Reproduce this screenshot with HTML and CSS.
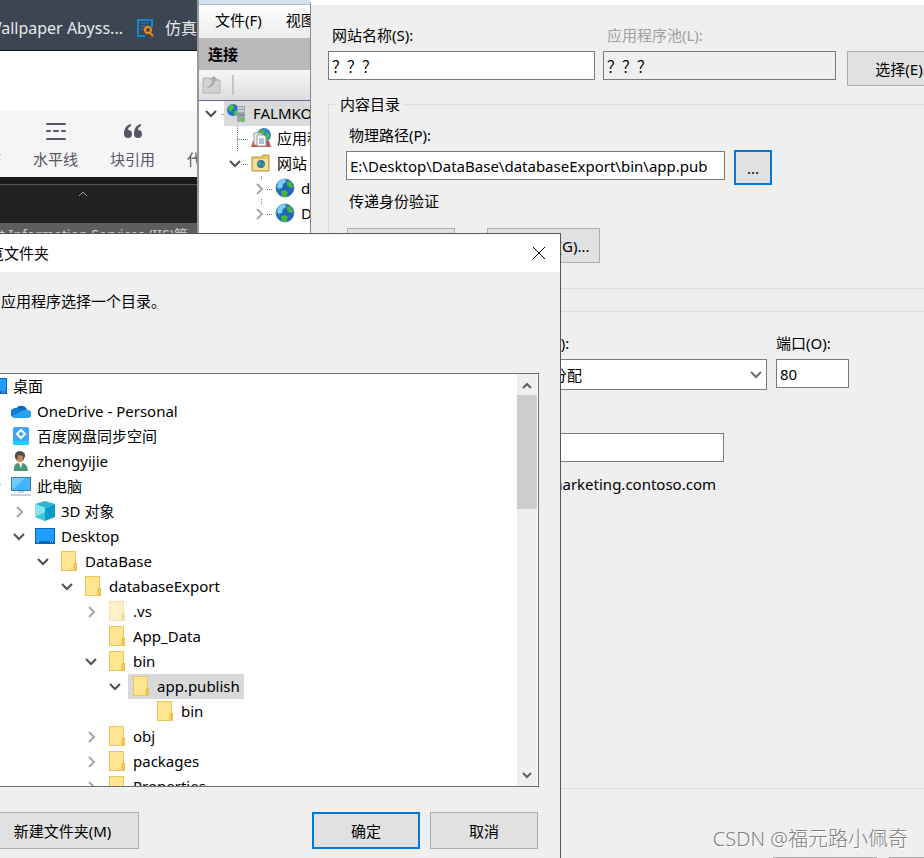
FILE: index.html
```
<!DOCTYPE html>
<html lang="zh-CN">
<head>
    <meta charset="UTF-8">
    <meta name="viewport" content="width=device-width, initial-scale=1.0">
    <title>浏览文件夹</title>
    <link rel="stylesheet" href="styles.css">
</head>
<body>

<!-- shared icons -->
<svg class="sprite" aria-hidden="true">
    <symbol id="open" viewBox="0 0 22 25"><path d="M4 10l5 5 5-5" fill="none" stroke="#505050" stroke-width="2"/></symbol>
    <symbol id="closed" viewBox="0 0 22 25"><path d="M7 8l5 5-5 5" fill="none" stroke="#a6a6a6" stroke-width="2"/></symbol>
    <symbol id="folder" viewBox="0 0 20 20">
        <path d="M2 0h15v12h1v8H2z" fill="#ecc659"/>
        <path d="M3 1h13v18H3z" fill="#ffe591"/>
        <path d="M15 19v-6l2-1v7z" fill="#f8d467" stroke="#e6b93e"/>
    </symbol>
    <symbol id="screen" viewBox="0 0 20 20">
        <path d="M0 2h20v16H0z" fill="#0867b5"/>
        <path d="M1 3h18v12H1z" fill="#1e9fff"/>
        <path d="M2 16h2M15 16h1M17 16h1" stroke="#c5e8ff"/>
    </symbol>
    <symbol id="globe" viewBox="0 0 20 20">
        <circle cx="10" cy="10" r="9" fill="#2563bd" stroke="#528bc2"/>
        <path d="M3 5q3-4 7-4l1 3-3 2-1 4-3 1-2-2z" fill="#7bcff0"/>
        <path d="M12 3l4 1 2 5-3 1-3-3zM6 13l4-1 3 2-2 5-4-1z" fill="#43ba35"/>
        <path d="M3 10l2 1v3z" fill="#35a646"/>
    </symbol>
</svg>

<div class="desktop">

    <!-- web browser -->
    <section class="browser">
        <nav class="bookmarks">
            <a href="#">Wallpaper Abyss...</a>
            <svg width="18" height="18" viewBox="0 0 18 18" fill="none">
                <path d="M8 17H1V1h14v7" stroke="#1686cf" stroke-width="2"/>
                <path d="M4 4h8M4 7h8M4 10h3" stroke="#1686cf"/>
                <circle cx="11" cy="11" r="3" stroke="#ee8b18" stroke-width="2"/>
                <path d="M13 14l3 3" stroke="#ee8b18" stroke-width="2"/>
            </svg>
            <a href="#">仿真</a>
        </nav>
        <div class="page-top"></div>
        <div class="editor-bar">
            <button>
                <svg width="20" height="20" viewBox="0 0 20 20"><path d="M0 3h20M0 10h20M0 17h20" stroke="#555666" stroke-width="2"/></svg>
                对齐
            </button>
            <button>
                <svg width="20" height="20" viewBox="0 0 20 20" stroke="#555666" stroke-width="2" stroke-linecap="round"><path d="M1 3h18M1 18h18M1 10h3M8 10h4M16 10h3"/></svg>
                水平线
            </button>
            <button>
                <svg width="20" height="20" viewBox="0 0 20 20" fill="#555666">
                    <path d="M8 3C3 4 1 8 1 13a4 4 0 1 0 4-4q0-3 3-4z"/>
                    <path d="M18 3c-5 1-7 5-7 10a4 4 0 1 0 4-4q0-3 3-4z"/>
                </svg>
                块引用
            </button>
            <button>
                <svg width="20" height="20"></svg>
                代码段
            </button>
        </div>
        <div class="dark-strip"></div>
        <div class="dark-panel">
            <svg width="10" height="6" viewBox="0 0 10 6"><path d="M1 5l4-4 4 4" fill="none" stroke="#999"/></svg>
        </div>
        <div class="tab-title">Internet Information Services (IIS)管</div>
    </section>

    <!-- IIS manager -->
    <section class="manager">
        <div class="manager-title"></div>
        <nav class="menu"><button>文件(F)</button><button>视图(V)</button></nav>
        <h2>连接</h2>
        <div class="manager-tools">
            <svg width="20" height="20" viewBox="0 0 20 20">
                <path d="M1 3h8l1 2h8v13H1z" fill="#d2d2d2" stroke="#b4b4b4"/>
                <path d="M4 13q7-3 6-9l-3 1 5-4 4 4-3 1q-1 7-9 7z" fill="#aaa"/>
            </svg>
            <span class="divider"></span>
        </div>
        <ul class="tree sites">
            <li>
                <div class="row">
                    <svg class="toggle"><use href="#open"/><path d="M19 13h3" class="dots"/></svg>
                    <span class="node server">
                        <svg class="icon" viewBox="0 0 20 20">
                            <circle cx="6" cy="7" r="6" fill="#246fc9"/>
                            <path d="M1 5q2-4 5-4l1 4-4 4zM7 8l3-1v4l-3 2z" fill="#45c53b"/>
                            <path d="M10 3h8v16h-8z" fill="#9aa7b4"/>
                            <path d="M11 5h6M11 8h6" stroke="#eef3f7"/>
                            <path d="M11 12h6" stroke="#6d7883"/>
                            <path d="M14 15h3v3h-3z" fill="#55cf24"/>
                        </svg>
                        FALMKO
                    </span>
                </div>
                <ul>
                    <li>
                        <div class="row">
                            <svg class="toggle"><path d="M11 0v25M11 13h11" class="dots"/></svg>
                            <span class="node">
                                <svg class="icon" viewBox="0 0 20 20">
                                    <circle cx="13" cy="7" r="7" fill="#327fcb"/>
                                    <path d="M8 3l6-2-1 4-4 2zM15 4l4 3-2 5-3-3z" fill="#47bc42"/>
                                    <path d="M2 13L0 19h20l-2-6z" fill="#bd5350"/>
                                    <path d="M3 5h8v12H3z" fill="#eee" stroke="#999"/>
                                    <path d="M6 7h7l2 2v9H6z" fill="#fff" stroke="#999"/>
                                    <path d="M8 11h5M8 13h5M8 15h5" stroke="#538bc8"/>
                                </svg>
                                应用程序池
                            </span>
                        </div>
                    </li>
                    <li>
                        <div class="row">
                            <svg class="toggle"><use href="#open"/><path d="M17 13h5" class="dots"/></svg>
                            <span class="node">
                                <svg class="icon" viewBox="0 0 20 20">
                                    <path d="M1 4h10l1-2h6v16H1z" fill="#ebc765" stroke="#ba9341"/>
                                    <path d="M2 6h15v11H2z" fill="#f8df98"/>
                                    <circle cx="10" cy="11" r="4" fill="#2b72bd"/>
                                    <path d="M7 10l3-2v3l-2 2zM11 11l3-1-2 4z" fill="#4bbd45"/>
                                </svg>
                                网站
                            </span>
                        </div>
                        <ul>
                            <li>
                                <div class="row">
                                    <svg class="toggle"><use href="#closed"/><path d="M11 0v3M11 23v2M17 13h5" class="dots"/></svg>
                                    <span class="node"><svg class="icon"><use href="#globe"/></svg>demo</span>
                                </div>
                            </li>
                            <li>
                                <div class="row">
                                    <svg class="toggle"><use href="#closed"/><path d="M11 0v3M17 13h5" class="dots"/></svg>
                                    <span class="node"><svg class="icon"><use href="#globe"/></svg>Default</span>
                                </div>
                            </li>
                        </ul>
                    </li>
                </ul>
            </li>
        </ul>
    </section>

    <!-- add website dialog -->
    <form class="add-site">
        <div class="name-row">
            <div class="field name">
                <label for="siteName">网站名称(S):</label>
                <input type="text" id="siteName" value="？？？">
            </div>
            <div class="field pool">
                <label for="appPool">应用程序池(L):</label>
                <input type="text" id="appPool" value="？？？" readonly>
            </div>
            <button type="button">选择(E)...</button>
        </div>

        <fieldset class="content-dir">
            <legend>内容目录</legend>
            <div class="path-row">
                <div class="field path">
                    <label for="path">物理路径(P):</label>
                    <input type="text" id="path" value="E:\Desktop\DataBase\databaseExport\bin\app.pub">
                </div>
                <button type="button" class="default">...</button>
            </div>
            <p>传递身份验证</p>
            <div class="auth-buttons">
                <button type="button">连接为(C)...</button>
                <button type="button">测试设置(G)...</button>
            </div>
        </fieldset>

        <fieldset class="binding">
            <legend>绑定</legend>
            <div class="address-row">
                <div class="field address">
                    <label for="ip">IP 地址(I):</label>
                    <div class="select-box">
                        <select id="ip"><option>全部未分配</option></select>
                        <svg width="12" height="8" viewBox="0 0 12 8"><path d="M1 1l5 5 5-5" fill="none" stroke="#707070" stroke-width="2"/></svg>
                    </div>
                </div>
                <div class="field port">
                    <label for="port">端口(O):</label>
                    <input type="text" id="port" value="80">
                </div>
            </div>
            <div class="field host">
                <label for="host">主机名(H):</label>
                <input type="text" id="host">
            </div>
            <p class="sample">示例: www.contoso.com 或 marketing.contoso.com</p>
        </fieldset>

        <div class="form-buttons">
            <button type="button">确定</button>
            <button type="button">取消</button>
        </div>
    </form>

    <!-- browse for folder dialog -->
    <section class="browse">
        <header>
            <h1>浏览文件夹</h1>
            <button class="close" aria-label="关闭">
                <svg width="14" height="14" viewBox="0 0 14 14"><path d="M1 1l12 12M13 1L1 13" stroke="#000"/></svg>
            </button>
        </header>
        <p class="prompt">为应用程序选择一个目录。</p>
        <div class="tree-box">
            <ul class="tree folders">
                <li>
                    <div class="row"><span class="node"><svg class="icon"><use href="#screen"/></svg>桌面</span></div>
                    <ul>
                        <li>
                            <div class="row">
                                <svg class="toggle"><use href="#closed"/></svg>
                                <span class="node">
                                    <svg class="icon" viewBox="0 0 20 20">
                                        <path d="M5 8a6 6 0 0 1 11 1l-7 5-5-2z" fill="#0865b8"/>
                                        <path d="M5 7q5 0 8 4l-9 6a5 5 0 0 1 1-10z" fill="#117bd1"/>
                                        <path d="M11 10q3-2 5-1a4 4 0 0 1 1 8H4q-2 0-3-2z" fill="#28a0ed"/>
                                    </svg>
                                    OneDrive - Personal
                                </span>
                            </div>
                        </li>
                        <li>
                            <div class="row">
                                <svg class="toggle"><use href="#closed"/></svg>
                                <span class="node">
                                    <svg class="icon" viewBox="0 0 20 20">
                                        <rect x="2" y="1" width="16" height="18" rx="2" fill="#3ca5ff"/>
                                        <path d="M2 15h16v3q0 1-2 1H4q-2 0-2-1z" fill="#19d2ff"/>
                                        <path d="M10 4l4 4-4 4-4-4z" fill="none" stroke="#fff" stroke-width="2"/>
                                    </svg>
                                    百度网盘同步空间
                                </span>
                            </div>
                        </li>
                        <li>
                            <div class="row">
                                <svg class="toggle"><use href="#closed"/></svg>
                                <span class="node">
                                    <svg class="icon" viewBox="0 0 20 20">
                                        <path d="M3 20q-1-8 5-8h4q5 2 5 8z" fill="#489878"/>
                                        <path d="M7 11h5l-2 6z" fill="#f2eee6"/>
                                        <circle cx="9" cy="7" r="4" fill="#bc8963"/>
                                        <path d="M4 7q-1-7 5-7 6 1 5 6l-2 3V5L7 4 6 9z" fill="#514c48"/>
                                    </svg>
                                    zhengyijie
                                </span>
                            </div>
                        </li>
                        <li>
                            <div class="row">
                                <svg class="toggle"><use href="#open"/></svg>
                                <span class="node">
                                    <svg class="icon" viewBox="0 0 20 20">
                                        <path d="M0 1h20v14H0z" fill="#317fb5"/>
                                        <path d="M1 2h18v12H1z" fill="#43b4ff"/>
                                        <path d="M1 14L14 2H1z" fill="#70caff"/>
                                        <path d="M7 16h6M0 19h20" stroke="#8ca6b8"/>
                                    </svg>
                                    此电脑
                                </span>
                            </div>
                            <ul>
                                <li>
                                    <div class="row">
                                        <svg class="toggle"><use href="#closed"/></svg>
                                        <span class="node">
                                            <svg class="icon" viewBox="0 0 20 20">
                                                <path d="M0 3l10-3 10 3-10 4z" fill="#2eb5cc"/>
                                                <path d="M0 3l10 4v13L0 16z" fill="#82e4ed"/>
                                                <path d="M20 3L10 7v13l10-4z" fill="#079fca"/>
                                                <path d="M0 16l10-5v9z" fill="#42c6d7"/>
                                            </svg>
                                            3D 对象
                                        </span>
                                    </div>
                                </li>
                                <li>
                                    <div class="row"><svg class="toggle"><use href="#open"/></svg><span class="node"><svg class="icon"><use href="#screen"/></svg>Desktop</span></div>
                                    <ul>
                                        <li>
                                            <div class="row"><svg class="toggle"><use href="#open"/></svg><span class="node"><svg class="icon"><use href="#folder"/></svg>DataBase</span></div>
                                            <ul>
                                                <li>
                                                    <div class="row"><svg class="toggle"><use href="#open"/></svg><span class="node"><svg class="icon"><use href="#folder"/></svg>databaseExport</span></div>
                                                    <ul>
                                                        <li><div class="row"><svg class="toggle"><use href="#closed"/></svg><span class="node hidden-dir"><svg class="icon"><use href="#folder"/></svg>.vs</span></div></li>
                                                        <li><div class="row"><svg class="toggle"></svg><span class="node"><svg class="icon"><use href="#folder"/></svg>App_Data</span></div></li>
                                                        <li>
                                                            <div class="row"><svg class="toggle"><use href="#open"/></svg><span class="node"><svg class="icon"><use href="#folder"/></svg>bin</span></div>
                                                            <ul>
                                                                <li>
                                                                    <div class="row"><svg class="toggle"><use href="#open"/></svg><span class="node selected"><svg class="icon"><use href="#folder"/></svg>app.publish</span></div>
                                                                    <ul>
                                                                        <li><div class="row"><svg class="toggle"></svg><span class="node"><svg class="icon"><use href="#folder"/></svg>bin</span></div></li>
                                                                    </ul>
                                                                </li>
                                                            </ul>
                                                        </li>
                                                        <li><div class="row"><svg class="toggle"><use href="#closed"/></svg><span class="node"><svg class="icon"><use href="#folder"/></svg>obj</span></div></li>
                                                        <li><div class="row"><svg class="toggle"><use href="#closed"/></svg><span class="node"><svg class="icon"><use href="#folder"/></svg>packages</span></div></li>
                                                        <li><div class="row"><svg class="toggle"><use href="#closed"/></svg><span class="node"><svg class="icon"><use href="#folder"/></svg>Properties</span></div></li>
                                                    </ul>
                                                </li>
                                            </ul>
                                        </li>
                                    </ul>
                                </li>
                            </ul>
                        </li>
                    </ul>
                </li>
            </ul>
            <div class="scrollbar">
                <svg width="20" height="21" viewBox="0 0 20 21"><path d="M6 14l4-4 4 4" fill="none" stroke="#606060" stroke-width="2"/></svg>
                <div class="thumb"></div>
                <svg width="20" height="21" viewBox="0 0 20 21"><path d="M6 8l4 4 4-4" fill="none" stroke="#606060" stroke-width="2"/></svg>
            </div>
        </div>
        <footer>
            <button class="new-folder">新建文件夹(M)</button>
            <button class="default">确定</button>
            <button>取消</button>
        </footer>
    </section>

    <div class="watermark">CSDN @福元路小佩奇</div>
</div>

</body>
</html>
```
FILE: styles.css
```
* {
    box-sizing: border-box;
}

body {
    margin: 0;
    font-family: "Noto Sans", "Noto Sans CJK SC", sans-serif;
    font-size: 15px;
    line-height: 20px;
    color: #000;
}

h1, h2, p, ul {
    margin: 0;
    padding: 0;
    font-size: 15px;
}

ul {
    list-style: none;
}

button, input, select {
    font: inherit;
    color: inherit;
}

button {
    padding: 0;
    white-space: nowrap;
    background-color: #e1e1e1;
    border: 1px solid #adadad;
}

button.default {
    border: 2px solid #0078d7;
}

input, select {
    width: 100%;
    height: 29px;
    padding: 0 3px;
    border: 1px solid #7a7a7a;
    border-radius: 0;
    background-color: #fff;
}

.sprite {
    display: none;
}

.desktop {
    position: relative;
    min-height: 100vh;
    overflow: hidden;
    background-color: #efefef;
}

/* ---- browser ---- */
.browser {
    position: absolute;
    left: 0;
    top: 0;
    width: 197px;
    overflow: hidden;
    white-space: nowrap;
}

.bookmarks {
    display: flex;
    align-items: center;
    justify-content: flex-end;
    gap: 14px;
    height: 51px;
    padding: 6px 0 0;
    background-color: #3b4652;
    border-bottom: 1px solid #111;
    font-size: 16px;
}

.bookmarks a {
    color: #e8eaec;
    text-decoration: none;
}

.bookmarks svg {
    flex: none;
    margin-right: -4px;
}

.page-top {
    height: 60px;
    background-color: #fff;
}

.editor-bar {
    display: flex;
    gap: 32px;
    height: 66px;
    margin-left: -29px;
    padding-top: 10px;
    background-color: #f5f5f5;
}

.editor-bar button {
    display: flex;
    flex-direction: column;
    align-items: center;
    gap: 8px;
    border: none;
    background: none;
    color: #555666;
}

.dark-strip {
    height: 8px;
    background-color: #1a1a1a;
    border-bottom: 1px solid #555;
}

.dark-panel {
    display: flex;
    justify-content: center;
    height: 38px;
    padding: 6px 32px 0 0;
    background-color: #212121;
}

.tab-title {
    display: flex;
    justify-content: flex-end;
    height: 24px;
    padding: 2px 9px;
    background-color: #5e5e5e;
    color: #d0d0d0;
    font-size: 14px;
}

/* ---- IIS manager ---- */
.manager {
    position: absolute;
    left: 197px;
    top: 0;
    width: 114px;
    height: 300px;
    overflow: hidden;
    border-left: 2px solid #999;
    background-color: #fff;
}

.manager-title {
    height: 5px;
    background-color: #d5e2f0;
    border-bottom: 1px solid #b5c1cc;
}

.menu {
    display: flex;
    gap: 24px;
    height: 33px;
    padding: 0 0 3px 16px;
    background: linear-gradient(#fff, #ececec);
}

.menu button {
    border: none;
    background: none;
}

.manager h2 {
    height: 32px;
    padding: 6px 9px;
    background-color: #bab8ba;
}

.manager-tools {
    display: flex;
    align-items: center;
    gap: 10px;
    height: 31px;
    padding-left: 3px;
    background: linear-gradient(#f7f6f7, #dedcde);
    border-bottom: 1px solid #66669a;
}

.divider {
    width: 2px;
    height: 20px;
    background-color: #c8c8b4;
}

.sites {
    padding-left: 3px;
}

.server {
    flex: 1;
    background-color: #dadada;
}

.dots {
    fill: none;
    stroke: #777;
    stroke-dasharray: 1 1;
    shape-rendering: crispEdges;
}

/* ---- trees ---- */
.tree ul {
    padding-left: 24px;
}

.row {
    display: flex;
    height: 25px;
    white-space: nowrap;
}

.toggle {
    flex: none;
    width: 22px;
    height: 25px;
}

.node {
    display: flex;
    align-items: center;
    gap: 6px;
    padding: 0 4px 1px 3px;
}

.icon {
    flex: none;
    width: 20px;
    height: 20px;
}

.selected {
    background-color: #d9d9d9;
}

.hidden-dir .icon {
    opacity: 0.5;
}

/* ---- add website ---- */
.add-site {
    position: absolute;
    left: 310px;
    top: 0;
    bottom: 0;
    width: 700px;
    overflow: hidden;
    padding: 20px 17px 0;
    background-color: #efefef;
    border-left: 1px solid #888;
    border-top: 5px solid #fff;
}

.field label {
    display: block;
    height: 26px;
    padding-left: 4px;
}

.name-row {
    display: flex;
    align-items: flex-start;
    gap: 8px;
}

.name {
    width: 267px;
}

.pool {
    width: 233px;
}

.pool label {
    color: #a0a0a0;
}

.pool input {
    background-color: #efefef;
}

.name-row button {
    width: 116px;
    height: 35px;
    margin: 26px 0 0 3px;
}

.add-site fieldset {
    margin: 0;
    padding: 0 17px;
    border: 1px solid #dcdcdc;
}

.add-site legend {
    margin-left: -10px;
    padding: 0 4px;
}

.content-dir {
    height: 195px;
}

.name-row + .content-dir {
    margin-top: 8px;
}

.path-row {
    display: flex;
    align-items: flex-end;
    gap: 9px;
    padding-top: 11px;
}

.path {
    width: 379px;
    padding-bottom: 5px;
}

.path label {
    padding-left: 3px;
}

.path-row button {
    width: 38px;
    height: 35px;
}

.add-site p {
    padding-left: 3px;
}

.content-dir p {
    margin-top: 6px;
}

.auth-buttons {
    display: flex;
    gap: 32px;
    padding: 17px 1px;
}

.auth-buttons button {
    width: 108px;
    height: 35px;
}

.auth-buttons button + button {
    width: 113px;
}

.add-site .binding {
    height: 488px;
    margin-top: 12px;
}

.address-row {
    display: flex;
    gap: 9px;
    padding: 12px 0 0 153px;
}

.address {
    width: 268px;
}

.port {
    width: 73px;
}

.port label {
    padding-left: 0;
}

.select-box {
    position: relative;
}

.select-box select {
    height: 31px;
    padding-left: 7px;
    appearance: none;
}

.select-box svg {
    position: absolute;
    right: 5px;
    top: 12px;
}

.host {
    width: 378px;
    padding: 17px 0 12px;
}

.sample {
    width: 370px;
    display: flex;
    justify-content: flex-end;
    white-space: nowrap;
}

.form-buttons {
    display: flex;
    gap: 12px;
    padding: 68px 0 0 445px;
}

.form-buttons button {
    width: 114px;
    height: 35px;
}

/* ---- browse for folder ---- */
.browse {
    position: absolute;
    left: -40px;
    top: 233px;
    bottom: 0;
    width: 601px;
    display: flex;
    flex-direction: column;
    background-color: #efefef;
    border: 1px solid #555;
    border-bottom: none;
}

.browse header {
    display: flex;
    justify-content: space-between;
    align-items: center;
    height: 38px;
    padding: 0 14px 0 13px;
    background-color: #fff;
}

.browse h1 {
    font-weight: normal;
}

.close {
    display: flex;
    border: none;
    background: none;
}

.prompt {
    height: 101px;
    padding: 19px 25px;
}

.tree-box {
    flex: 1;
    min-height: 0;
    display: flex;
    margin: 0 21px;
    padding: 0 1px;
    overflow: hidden;
    background-color: #fff;
    border: 1px solid #707070;
}

.folders {
    flex: 1;
}

/* the root has no toggle, so its children barely step in */
.folders > li > ul {
    padding-left: 2px;
}

.scrollbar {
    display: flex;
    flex-direction: column;
    width: 20px;
    background-color: #efefef;
}

.scrollbar svg {
    flex: none;
}

.thumb {
    flex: none;
    height: 114px;
    margin-bottom: auto;
    background-color: #cdcdcd;
}

.browse footer {
    display: flex;
    gap: 10px;
    padding: 25px 22px 9px 25px;
}

.browse footer button {
    width: 108px;
    height: 37px;
}

.browse footer .new-folder {
    width: 153px;
    margin-right: auto;
}

.watermark {
    position: absolute;
    right: 16px;
    bottom: 5px;
    font-size: 20px;
    line-height: 28px;
    font-weight: 300;
    color: #808080;
    text-shadow: 1px 1px #fff;
}
```
